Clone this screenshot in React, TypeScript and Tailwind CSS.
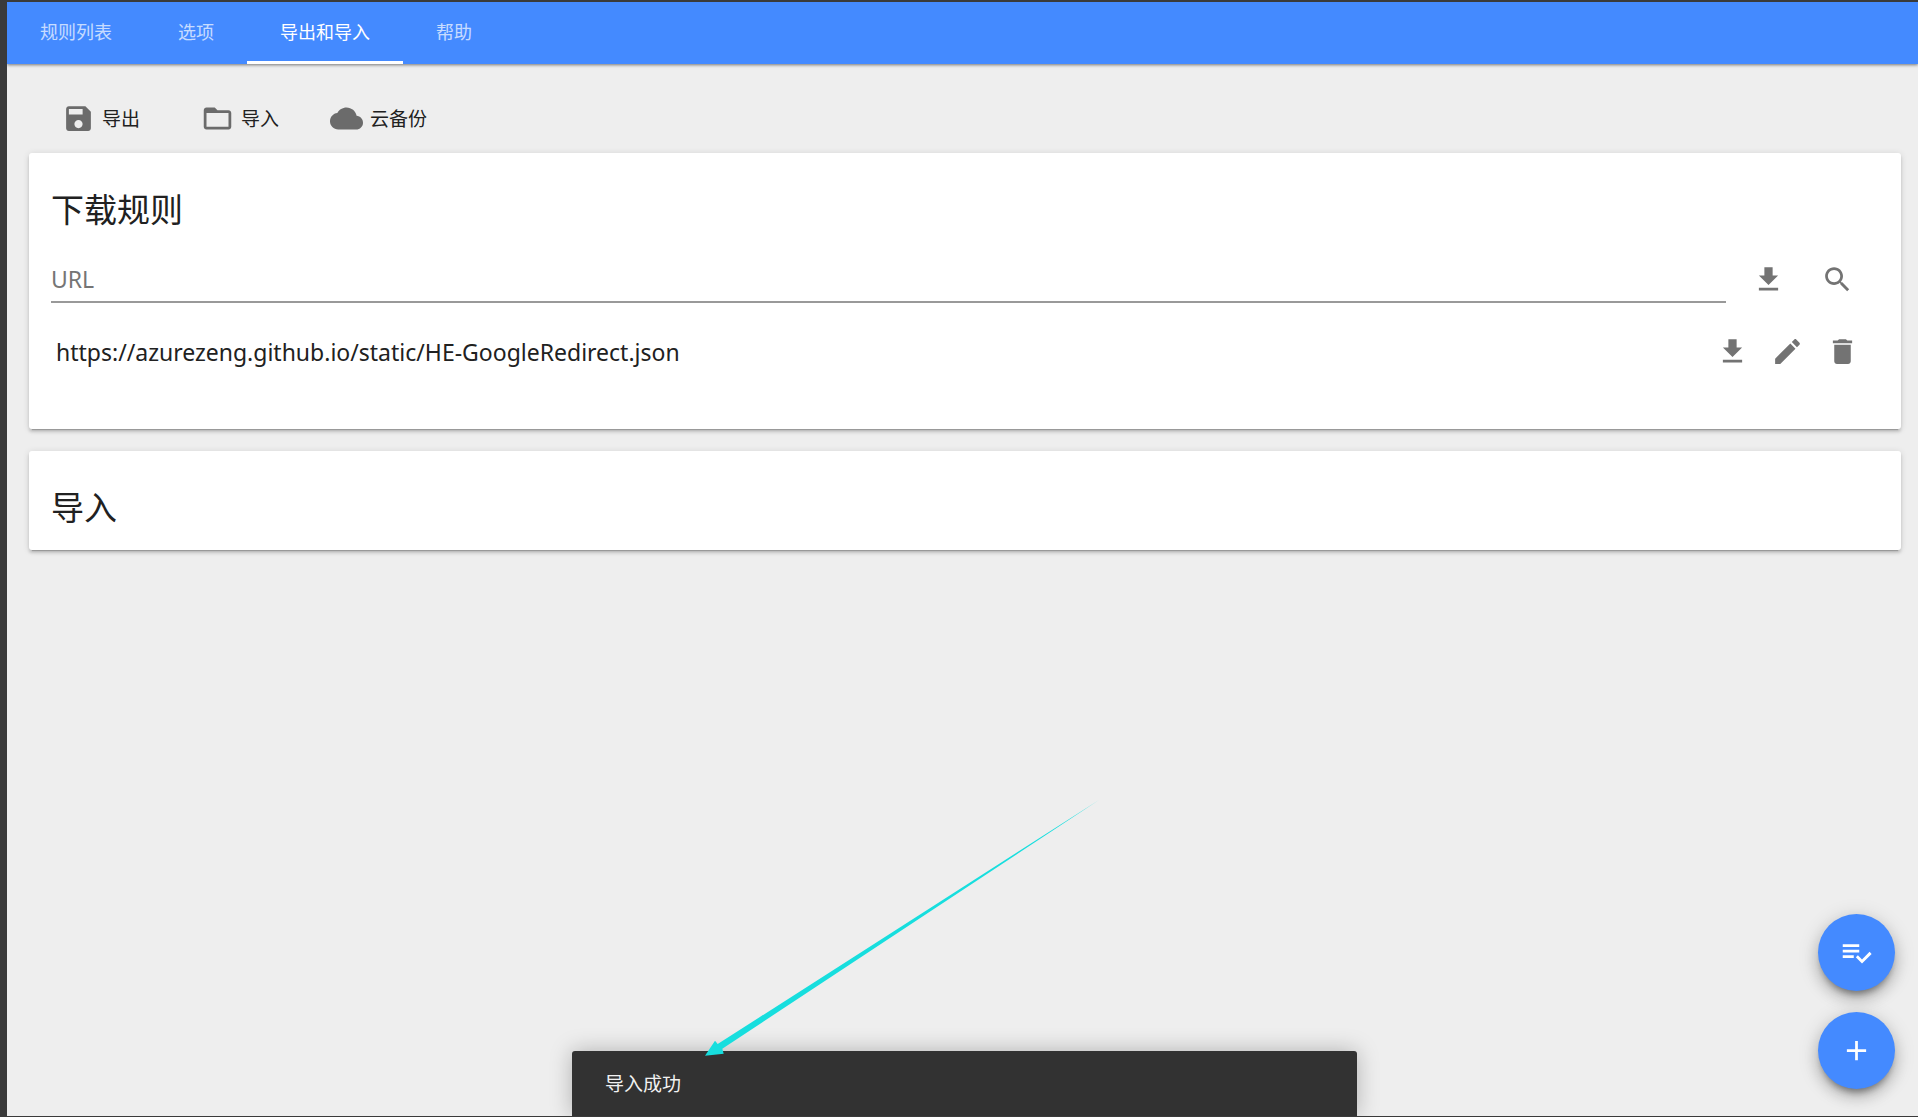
import React, { useState } from 'react';

const icons = {
  save: 'M17 3H5c-1.11 0-2 .9-2 2v14c0 1.1.89 2 2 2h14c1.1 0 2-.9 2-2V7l-4-4zm-5 16c-1.66 0-3-1.34-3-3s1.34-3 3-3 3 1.34 3 3-1.34 3-3 3zm3-10H5V5h10v4z',
  folder: 'M20 6h-8l-2-2H4c-1.1 0-1.99.9-1.99 2L2 18c0 1.1.9 2 2 2h16c1.1 0 2-.9 2-2V8c0-1.1-.9-2-2-2zm0 12H4V8h16v10z',
  cloud: 'M19.35 10.04C18.67 6.59 15.64 4 12 4 9.11 4 6.6 5.64 5.35 8.04 2.34 8.36 0 10.91 0 14c0 3.31 2.69 6 6 6h13c2.76 0 5-2.24 5-5 0-2.64-2.05-4.78-4.65-4.96z',
  download: 'M19 9h-4V3H9v6H5l7 7 7-7zM5 18v2h14v-2H5z',
  search: 'M15.5 14h-.79l-.28-.27C15.41 12.59 16 11.11 16 9.5 16 5.91 13.09 3 9.5 3S3 5.91 3 9.5 5.91 16 9.5 16c1.61 0 3.09-.59 4.23-1.57l.27.28v.79l5 4.99L20.49 19l-4.99-5zm-6 0C7.01 14 5 11.99 5 9.5S7.01 5 9.5 5 14 7.01 14 9.5 11.99 14 9.5 14z',
  edit: 'M3 17.25V21h3.75L17.81 9.94l-3.75-3.75L3 17.25zM20.71 7.04c.39-.39.39-1.02 0-1.41l-2.34-2.34c-.39-.39-1.02-.39-1.41 0l-1.83 1.83 3.75 3.75 1.83-1.83z',
  trash: 'M6 19c0 1.1.9 2 2 2h8c1.1 0 2-.9 2-2V7H6v12zM19 4h-3.5l-1-1h-5l-1 1H5v2h14V4z',
  listCheck: 'M14 10H2v2h12v-2zm0-4H2v2h12V6zM2 16h8v-2H2v2zm19.5-4.5L23 13l-6.99 7-4.51-4.5L13 14l3.01 3 5.49-5.5z',
  add: 'M19 13h-6v6h-2v-6H5v-2h6V5h2v6h6v2z'
};

type IconName = keyof typeof icons;

const Icon: React.FC<{ name: IconName }> = ({ name }) => (
  <svg viewBox="0 0 24 24" className="w-[33px] h-[33px] shrink-0 fill-current" aria-hidden="true">
    <path d={icons[name]} />
  </svg>
);

const IconButton: React.FC<{ name: IconName; label: string }> = ({ name, label }) => (
  <button
    type="button"
    aria-label={label}
    className="flex h-[55px] w-[55px] shrink-0 items-center justify-center rounded-full text-[#737373]"
  >
    <Icon name={name} />
  </button>
);

const ToolButton: React.FC<{ name: IconName; label: string }> = ({ name, label }) => (
  <button type="button" className="flex items-center gap-[7px] text-[19px] leading-7">
    <span className="text-[#6b6b6b]">
      <Icon name={name} />
    </span>
    {label}
  </button>
);

const Fab: React.FC<{ name: IconName; label: string }> = ({ name, label }) => (
  <button
    type="button"
    aria-label={label}
    className="flex h-[77px] w-[77px] items-center justify-center rounded-full bg-[#448aff] text-white shadow-[0_8px_14px_1px_rgba(0,0,0,0.14),0_4px_19px_3px_rgba(0,0,0,0.12),0_7px_7px_-4px_rgba(0,0,0,0.4)]"
  >
    <Icon name={name} />
  </button>
);

const Card: React.FC<{ title: string; className: string; children?: React.ReactNode }> = ({ title, className, children }) => (
  <section
    className={`rounded-[3px] bg-white pl-[22px] pt-[35px] shadow-[0_3px_3px_rgba(0,0,0,0.14),0_1px_7px_rgba(0,0,0,0.12),0_4px_1px_-3px_rgba(0,0,0,0.2)] ${className}`}
  >
    <h2 className="text-[33px] leading-[44px]">{title}</h2>
    {children}
  </section>
);

const tabs = ['规则列表', '选项', '导出和导入', '帮助'];

const App: React.FC = () => {
  const [active, setActive] = useState(2);
  const [url, setUrl] = useState('');

  return (
    <div className="flex min-h-screen flex-col bg-[#3a3a3a] pt-[2px] pb-px pl-[7px] font-['Noto_Sans','Noto_Sans_CJK_SC',sans-serif] text-[#212121]">
      <div className="relative flex-1 overflow-hidden bg-[#eee]">
        {/* Tabs */}
        <nav className="flex h-[62px] bg-[#448aff] shadow-[0_1px_3px_rgba(0,0,0,0.5)]">
          {tabs.map((tab, index) => (
            <button
              key={tab}
              type="button"
              onClick={() => setActive(index)}
              className={`border-b-[3px] px-[33px] text-[18px] leading-7 text-white ${
                index === active ? 'border-white' : 'border-transparent'
              }`}
            >
              <span className={index === active ? '' : 'opacity-70'}>{tab}</span>
            </button>
          ))}
        </nav>

        <main className="pl-[22px] pr-[17px]">
          {/* Toolbar */}
          <div className="flex h-[89px] items-center pl-[33px] pt-5">
            <ToolButton name="save" label="导出" />
            <div className="ml-[61px] mr-[51px]">
              <ToolButton name="folder" label="导入" />
            </div>
            <ToolButton name="cloud" label="云备份" />
          </div>

          <Card title="下载规则" className="pb-[50px]">
            <div className="mt-5 flex items-center pr-9">
              <input
                type="text"
                aria-label="URL"
                placeholder="URL"
                value={url}
                onChange={(e) => setUrl(e.target.value)}
                className="mr-[15px] h-[46px] min-w-0 flex-1 border-b-2 border-[#999] bg-transparent text-[23px] outline-none placeholder:text-[#757575]"
              />
              <div className="flex gap-[14px]">
                <IconButton name="download" label="下载" />
                <IconButton name="search" label="搜索" />
              </div>
            </div>
            <div className="mt-[17px] flex items-center pl-[5px] pr-[31px]">
              <span className="min-w-0 flex-1 truncate text-[23px] leading-8">
                https://azurezeng.github.io/static/HE-GoogleRedirect.json
              </span>
              <IconButton name="download" label="下载" />
              <IconButton name="edit" label="编辑" />
              <IconButton name="trash" label="删除" />
            </div>
          </Card>

          <Card title="导入" className="mt-[22px] pb-5" />
        </main>

        {/* Floating actions */}
        <div className="absolute bottom-[27px] right-[23px] flex flex-col gap-[21px]">
          <Fab name="listCheck" label="批量选择" />
          <Fab name="add" label="添加" />
        </div>

        {/* Toast */}
        <div className="absolute inset-x-0 bottom-0 flex justify-center pl-1">
          <div
            role="status"
            className="relative h-[65px] w-[785px] rounded-t-[3px] bg-[#323232] px-[33px] text-[19px] leading-[66px] text-[#f1f1f1] shadow-[0_0_22px_rgba(0,0,0,0.26)]"
          >
            导入成功
            <svg
              viewBox="0 0 394 256"
              className="pointer-events-none absolute bottom-[60px] left-[133px] h-[256px] w-[394px]"
              aria-hidden="true"
            >
              <path d="M0 255.7L10 240.7L12.7 244L394 0L17.3 248.7L18.7 253.7Z" fill="#17dede" />
            </svg>
          </div>
        </div>
      </div>
    </div>
  );
};

export default App;
